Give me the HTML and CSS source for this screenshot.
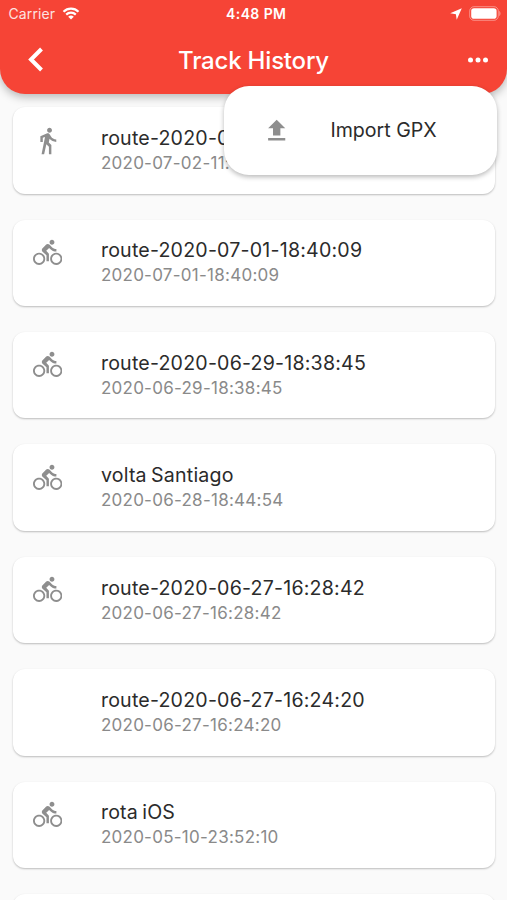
FILE: index.html
```html
<!DOCTYPE html>
<html lang="en">
<head>
    <meta charset="UTF-8">
    <meta name="viewport" content="width=device-width, initial-scale=1.0">
    <title>Track History</title>
    <link rel="stylesheet" href="styles.css">
</head>
<body>
    <!-- shared icons -->
    <svg class="sprite">
        <symbol id="walk" viewBox="0 0 24 24">
            <path d="M13.5 5.5c1.1 0 2-.9 2-2s-.9-2-2-2-2 .9-2 2 .9 2 2 2zM9.8 8.9L7 23h2.1l1.8-8 2.1 2v6h2v-7.5l-2.1-2 .6-3C14.8 12 16.8 13 19 13v-2c-1.9 0-3.5-1-4.3-2.4l-1-1.6c-.4-.6-1-1-1.7-1-.3 0-.5.1-.8.1L6 8.3V13h2V9.6l1.8-.7"/>
        </symbol>
        <symbol id="bike" viewBox="0 0 24 24">
            <path d="M15.5 5.5c1.1 0 2-.9 2-2s-.9-2-2-2-2 .9-2 2 .9 2 2 2zM5 12c-2.8 0-5 2.2-5 5s2.2 5 5 5 5-2.2 5-5-2.2-5-5-5zm0 8.5c-1.9 0-3.5-1.6-3.5-3.5s1.6-3.5 3.5-3.5 3.5 1.6 3.5 3.5-1.6 3.5-3.5 3.5zm5.8-10l2.4-2.4.8.8c1.3 1.3 3 2.1 5.1 2.1V9c-1.5 0-2.7-.6-3.6-1.5l-1.9-1.9c-.5-.4-1-.6-1.6-.6s-1.1.2-1.4.6L7.800 8.400c-.4.4-.6.9-.6 1.400 0 .6.2 1.100.6 1.400L11 14v5h2v-6.200l-2.200-2.300zM19 12c-2.800 0-5 2.200-5 5s2.200 5 5 5 5-2.200 5-5-2.200-5-5-5zm0 8.500c-1.900 0-3.500-1.600-3.500-3.500s1.600-3.500 3.500-3.500 3.500 1.600 3.500 3.500-1.600 3.500-3.500 3.500z"/>
        </symbol>
    </svg>

    <header class="header">
        <div class="status">
            <div class="status-left">
                <span class="carrier">Carrier</span>
                <svg class="wifi" viewBox="0 0 18 13">
                    <path class="arc" d="M1.500 4.700a10.800 10.800 0 0 1 15 0"/>
                    <path class="arc" d="M4.200 7.600a6.900 6.900 0 0 1 9.600 0"/>
                    <path d="M9 12.600L6.200 9.800a4 4 0 0 1 5.600 0z"/>
                </svg>
            </div>
            <span class="clock">4:48 PM</span>
            <div class="status-right">
                <svg class="location" viewBox="0 0 12 12"><path d="M11.800.2L6.700 11.800 5.900 6.200.2 5.300z"/></svg>
                <svg class="battery" viewBox="0 0 32 15">
                    <rect class="shell" x=".7" y=".7" width="28.600" height="13.600" rx="4.300"/>
                    <rect x="2.200" y="2.300" width="25.400" height="10.400" rx="2.800"/>
                    <path class="cap" d="M30.300 5c1.500.6 1.500 4.400 0 5z"/>
                </svg>
            </div>
        </div>
        <div class="bar">
            <svg class="back" viewBox="0 0 16 25"><path d="M13.500 2L3 12.500 13.500 23"/></svg>
            <h1>Track History</h1>
            <svg class="more" viewBox="0 0 20 6"><circle cx="2.500" cy="3" r="2.500"/><circle cx="10" cy="3" r="2.500"/><circle cx="17.500" cy="3" r="2.500"/></svg>
        </div>
        <div class="menu">
            <svg class="upload" viewBox="0 0 24 24"><path d="M9 16h6v-6h4l-7-7-7 7h4zm-4 2h14v2H5z"/></svg>
            <span>Import GPX</span>
        </div>
    </header>

    <main class="tracks">
        <div class="card">
            <svg class="icon"><use href="#walk"/></svg>
            <div class="info">
                <p class="name">route-2020-0</p>
                <p class="date">2020-07-02-11:</p>
            </div>
        </div>
        <div class="card">
            <svg class="icon"><use href="#bike"/></svg>
            <div class="info">
                <p class="name">route-2020-07-01-18:40:09</p>
                <p class="date">2020-07-01-18:40:09</p>
            </div>
        </div>
        <div class="card">
            <svg class="icon"><use href="#bike"/></svg>
            <div class="info">
                <p class="name">route-2020-06-29-18:38:45</p>
                <p class="date">2020-06-29-18:38:45</p>
            </div>
        </div>
        <div class="card">
            <svg class="icon"><use href="#bike"/></svg>
            <div class="info">
                <p class="name">volta Santiago</p>
                <p class="date">2020-06-28-18:44:54</p>
            </div>
        </div>
        <div class="card">
            <svg class="icon"><use href="#bike"/></svg>
            <div class="info">
                <p class="name">route-2020-06-27-16:28:42</p>
                <p class="date">2020-06-27-16:28:42</p>
            </div>
        </div>
        <div class="card">
            <svg class="icon"></svg>
            <div class="info">
                <p class="name">route-2020-06-27-16:24:20</p>
                <p class="date">2020-06-27-16:24:20</p>
            </div>
        </div>
        <div class="card">
            <svg class="icon"><use href="#bike"/></svg>
            <div class="info">
                <p class="name">rota iOS</p>
                <p class="date">2020-05-10-23:52:10</p>
            </div>
        </div>
        <div class="card"></div>
    </main>
</body>
</html>
```
FILE: styles.css
```css
* {
    box-sizing: border-box;
}
body {
    margin: 0;
    height: 900px;
    overflow: hidden;
    background-color: #fafafa;
    font-family: Inter, "Liberation Sans", sans-serif;
    color: #2b2b2b;
}
h1, p {
    margin: 0;
}
svg {
    display: block;
    fill: currentColor;
}
.sprite {
    display: none;
}

/* header */
.header {
    position: relative;
    z-index: 1;
    height: 93.5px;
    background-color: #f64436;
    border-radius: 0 0 25px 25px;
    color: white;
    box-shadow: 0 3px 10px rgba(0, 0, 0, 0.28);
}
.status {
    display: grid;
    grid-template-columns: 1fr auto 1fr;
    align-items: center;
    height: 27px;
    padding: 0 6px 0 8.5px;
}
.status-left {
    display: flex;
    align-items: center;
    gap: 6.5px;
}
.carrier {
    font-size: 14px;
    letter-spacing: 0.1px;
    opacity: 0.85;
}
.wifi {
    width: 18px;
    height: 13px;
}
.arc {
    fill: none;
    stroke: currentColor;
    stroke-width: 2.2;
}
.clock {
    font-size: 14px;
    font-weight: 600;
    letter-spacing: 0.4px;
    margin-left: 3px;
}
.status-right {
    display: flex;
    justify-content: flex-end;
    align-items: center;
    gap: 7.5px;
}
.location {
    width: 12px;
    height: 12px;
}
.battery {
    width: 32px;
    height: 15px;
}
.shell {
    fill: none;
    stroke: currentColor;
    opacity: 0.4;
}
.cap {
    opacity: 0.5;
}
.bar {
    display: grid;
    grid-template-columns: 1fr auto 1fr;
    align-items: center;
    height: 65px;
    padding: 0 19px;
}
.back {
    width: 16px;
    height: 25px;
    margin-left: 8.5px;
    fill: none;
    stroke: currentColor;
    stroke-width: 4;
}
h1 {
    font-size: 24px;
    font-weight: 500;
    letter-spacing: -0.2px;
    padding-top: 1px;
}
.more {
    width: 20px;
    height: 6px;
    justify-self: end;
}

/* popup menu */
.menu {
    position: absolute;
    top: 86px;
    right: 10px;
    width: 273.5px;
    height: 88.5px;
    padding-left: 38.5px;
    display: flex;
    align-items: center;
    gap: 39px;
    background-color: white;
    border-radius: 25px;
    color: #2b2b2b;
    font-size: 19.6px;
    box-shadow: 0 2px 5px rgba(0, 0, 0, 0.28);
}
.upload {
    width: 29.4px;
    height: 29.4px;
    color: #8e8e8e;
}

/* track list */
.tracks {
    display: flex;
    flex-direction: column;
    gap: 26px;
    height: 806.5px;
    padding: 13.8px 12.5px 0 13px;
    overflow: hidden;
}
.card {
    display: flex;
    flex-shrink: 0;
    gap: 39px;
    height: 86.4px;
    padding: 18.300px 19.500px;
    background-color: white;
    border-radius: 12px;
    box-shadow: 0 1px 2px rgba(0, 0, 0, 0.25);
}
.icon {
    width: 29.4px;
    height: 29.4px;
    color: #8e8e8e;
}
.info {
    padding-top: 0.4px;
}
.name {
    font-size: 19.6px;
    line-height: 25px;
    letter-spacing: 0.2px;
    word-spacing: -1.500px;
}
.date {
    font-size: 17px;
    line-height: 25.200px;
    letter-spacing: 0.26px;
    color: #8a8a8a;
}
```
